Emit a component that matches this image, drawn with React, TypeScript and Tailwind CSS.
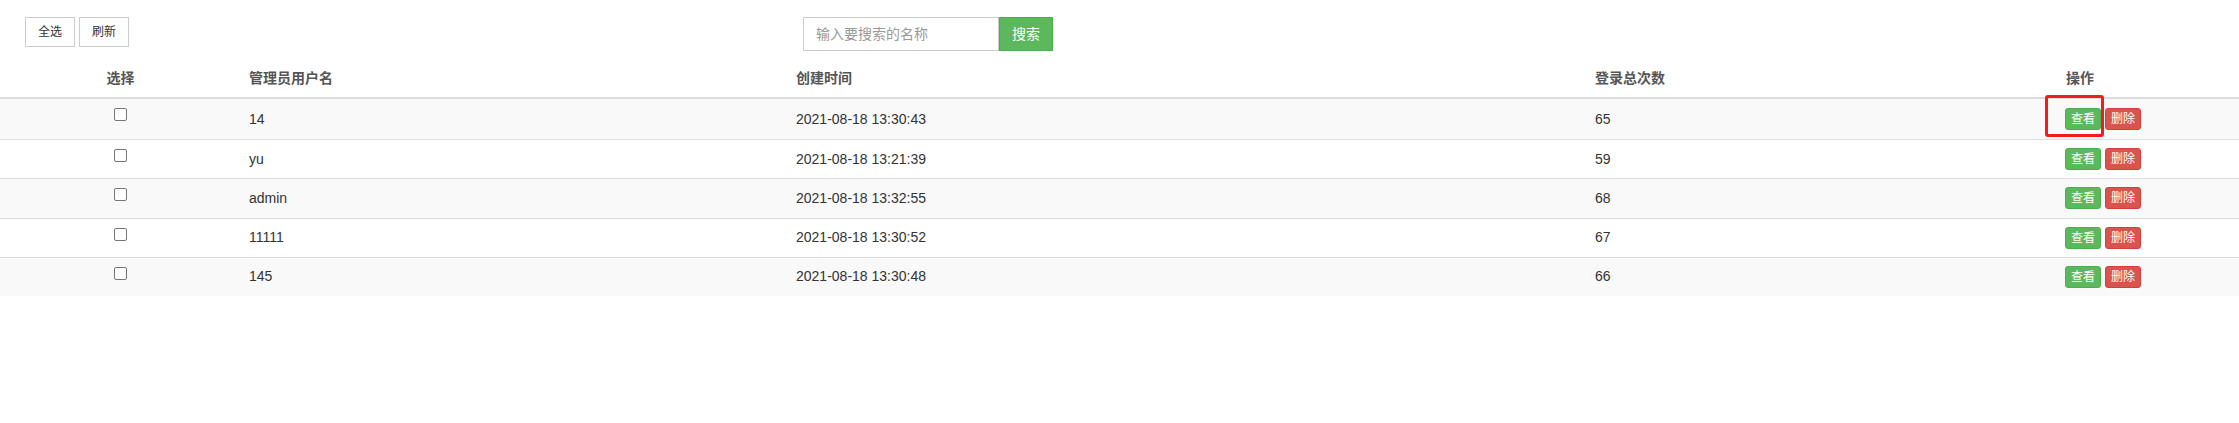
import React from "react";

const rows = [
  { name: "14", time: "2021-08-18 13:30:43", count: "65" },
  { name: "yu", time: "2021-08-18 13:21:39", count: "59" },
  { name: "admin", time: "2021-08-18 13:32:55", count: "68" },
  { name: "11111", time: "2021-08-18 13:30:52", count: "67" },
  { name: "145", time: "2021-08-18 13:30:48", count: "66" },
];

const cols = "grid grid-cols-[241px_547px_799px_471px_1fr]";

export default function App() {
  return (
    <div
      className="relative w-[2239px] h-[423px] bg-white text-[#333] text-[14px]"
      style={{ fontFamily: '"Liberation Sans", Arial, "Noto Sans CJK SC", sans-serif' }}
    >
      {/* toolbar */}
      <div className="flex items-start pt-[17px] h-[62px]">
        <div className="flex gap-[4px] ml-[25px]">
          <button className="h-[30px] w-[50px] border border-[#ccc] bg-white text-[12px] leading-[18px] text-[#333]">全选</button>
          <button className="h-[30px] w-[50px] border border-[#ccc] bg-white text-[12px] leading-[18px] text-[#333]">刷新</button>
        </div>
        <div className="flex ml-[674px]">
          <input
            className="h-[34px] w-[196px] border border-[#ccc] px-[12px] text-[14px] outline-none placeholder:text-[#999]"
            placeholder="输入要搜索的名称"
          />
          <button className="h-[34px] w-[54px] bg-[#5cb85c] border border-[#4cae4c] text-white text-[14px]">搜索</button>
        </div>
      </div>

      {/* header */}
      <div className={`${cols} h-[37px] border-b-2 border-[#ddd] font-bold text-[#555]`}>
        <div className="flex items-center justify-center pb-[2px]">选择</div>
        <div className="flex items-center px-[8px] pb-[2px]">管理员用户名</div>
        <div className="flex items-center px-[8px] pb-[2px]">创建时间</div>
        <div className="flex items-center px-[8px] pb-[2px]">登录总次数</div>
        <div className="flex items-center px-[8px] pb-[2px]">操作</div>
      </div>

      {/* body */}
      {rows.map((r, i) => (
        <div
          key={i}
          className={`${cols} ${i === 0 ? "h-[40px]" : "h-[39.25px] border-t border-[#ddd]"} ${i % 2 === 0 ? "bg-[#f9f9f9]" : "bg-white"}`}
        >
          <div className="flex justify-center pt-[9px]">
            <span className="block w-[13px] h-[13px] rounded-[2px] border border-[#767676] bg-white" />
          </div>
          <div className="flex items-center px-[8px]">{r.name}</div>
          <div className="flex items-center px-[8px]">{r.time}</div>
          <div className="flex items-center px-[8px]">{r.count}</div>
          <div className="flex items-center px-[7px] gap-[4px]">
            <button className="h-[22px] w-[36px] rounded-[3px] bg-[#5cb85c] border border-[#4cae4c] text-white text-[12px] leading-[18px]">查看</button>
            <button className="h-[22px] w-[36px] rounded-[3px] bg-[#d9534f] border border-[#d43f3a] text-white text-[12px] leading-[18px]">删除</button>
          </div>
        </div>
      ))}

      {/* annotation */}
      <div className="absolute left-[2045px] top-[95px] w-[59px] h-[42px] border-[3px] border-[#f21c1c] rounded-[3px]" />
    </div>
  );
}
